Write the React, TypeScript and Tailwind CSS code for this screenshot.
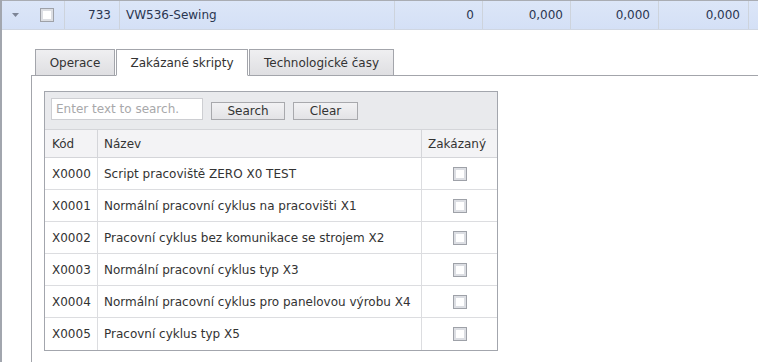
import React from 'react';

const scripts = [
  { code: 'X0000', name: 'Script pracoviště ZERO X0 TEST' },
  { code: 'X0001', name: 'Normální pracovní cyklus na pracovišti X1' },
  { code: 'X0002', name: 'Pracovní cyklus bez komunikace se strojem X2' },
  { code: 'X0003', name: 'Normální pracovní cyklus typ X3' },
  { code: 'X0004', name: 'Normální pracovní cyklus pro panelovou výrobu X4' },
  { code: 'X0005', name: 'Pracovní cyklus typ X5' },
];

const tabs = [
  { label: 'Operace', width: 'w-[80px]' },
  { label: 'Zakázané skripty', width: 'w-[132px]', active: true },
  { label: 'Technologické časy', width: 'w-[145px]' },
];

function CheckBox() {
  return (
    <div className="w-[14px] h-[14px] border border-[#9ea1a8] bg-white shadow-[inset_0_0_0_2px_#dcdee3]" />
  );
}

export default function App() {
  return (
    <div className="flex h-[362px] w-[758px] overflow-hidden bg-white font-['DejaVu_Sans',sans-serif] text-[12px] text-[#333]">
      {/* left edge bar */}
      <div className="w-[2px] shrink-0 bg-[#a2a6ae]" />

      <div className="flex flex-1 flex-col">
        {/* master row */}
        <div className="flex h-[30px] shrink-0 border-t border-b border-t-[#a9acb3] border-b-[#cfd6e2] bg-gradient-to-b from-[#dce6f8] to-[#d4e0f6] text-[#2a3550]">
          <div className="flex w-[26px] items-center justify-center pl-[1px]">
            <svg width="7" height="4" viewBox="0 0 7 4">
              <polygon points="0,0 7,0 3.5,4" fill="#7d8596" />
            </svg>
          </div>
          <div className="flex w-[36px] items-center justify-center pl-[1px]">
            <CheckBox />
          </div>
          <div className="flex w-[55px] items-center justify-end border-l border-[#cdd3dc] pr-[8px]">733</div>
          <div className="flex w-[275px] items-center border-l border-[#cdd3dc] pl-[6px]">VW536-Sewing</div>
          <div className="flex w-[88px] items-center justify-end border-l border-[#cdd3dc] pr-[8px]">0</div>
          <div className="flex w-[88px] items-center justify-end border-l border-[#cdd3dc] pr-[7px]">0,000</div>
          <div className="flex w-[88px] items-center justify-end border-l border-[#cdd3dc] pr-[8px]">0,000</div>
          <div className="flex w-[90px] items-center justify-end border-l border-[#cdd3dc] pr-[8px]">0,000</div>
          <div className="flex-1 border-l border-[#cdd3dc]" />
        </div>

        {/* detail area */}
        <div className="flex flex-1 flex-col pl-[29px] pt-[19px]">
          {/* tab strip */}
          <div className="flex h-[27px] shrink-0 items-end gap-[1px] border-b border-[#a3a5ab] pl-[4px]">
            {tabs.map((tab) => (
              <div
                key={tab.label}
                className={`${tab.width} -mb-px flex h-[27px] items-center justify-center border border-[#a3a5ab] ${
                  tab.active
                    ? 'border-b-white bg-white'
                    : 'bg-gradient-to-b from-[#efeff1] to-[#dfdfe2]'
                }`}
              >
                {tab.label}
              </div>
            ))}
          </div>

          {/* tab panel */}
          <div className="flex-1 border-l border-[#a3a5ab] pl-[12px] pt-[15px]">
            <div className="w-[454px] border border-[#a3a6ad]">
              {/* search toolbar */}
              <div className="flex h-[37px] items-start gap-[8px] bg-[#e9eaed] pl-[6px] pt-[6px]">
                <div className="flex h-[22px] w-[152px] items-center border border-[#cdced2] bg-white pl-[4px] text-[#a8a8aa]">
                  Enter text to search.
                </div>
                <div className="mt-[4px] flex h-[18px] w-[74px] items-center justify-center border border-[#a8a9ad] bg-gradient-to-b from-[#f2f2f4] to-[#e3e3e6]">
                  Search
                </div>
                <div className="mt-[4px] flex h-[18px] w-[65px] items-center justify-center border border-[#a8a9ad] bg-gradient-to-b from-[#f2f2f4] to-[#e3e3e6]">
                  Clear
                </div>
              </div>

              {/* header */}
              <div className="flex h-[29px] border-t border-b border-[#d4d5d9] bg-[#f3f3f5]">
                <div className="flex w-[52px] items-center pl-[7px]">Kód</div>
                <div className="flex w-[324px] items-center border-l border-[#d4d5d9] pl-[6px]">Název</div>
                <div className="flex flex-1 items-center border-l border-[#d4d5d9] pl-[6px]">Zakázaný</div>
              </div>

              {/* rows */}
              {scripts.map((s, i) => (
                <div
                  key={s.code}
                  className={`flex h-[32px] ${i < scripts.length - 1 ? 'border-b border-[#dcdde0]' : 'h-[31px]'}`}
                >
                  <div className="flex w-[52px] items-center pl-[7px]">{s.code}</div>
                  <div className="flex w-[324px] items-center border-l border-[#dcdde0] pl-[6px]">{s.name}</div>
                  <div className="flex flex-1 items-center justify-center border-l border-[#dcdde0] pl-[1px]">
                    <CheckBox />
                  </div>
                </div>
              ))}
            </div>
          </div>
        </div>
      </div>
    </div>
  );
}
